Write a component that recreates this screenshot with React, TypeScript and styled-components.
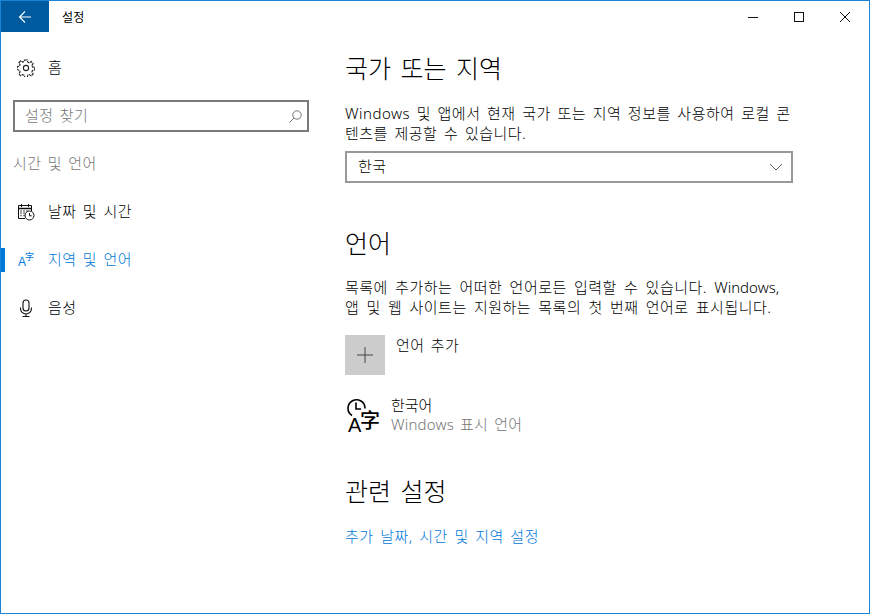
import React from 'react';
import styled, { createGlobalStyle } from 'styled-components';

const GlobalStyle = createGlobalStyle`
  html, body {
    margin: 0;
    padding: 0;
    background: #fff;
  }
  * {
    box-sizing: border-box;
  }
`;

const Window = styled.div`
  width: 870px;
  height: 614px;
  border: 1px solid #1883d7;
  background: #fff;
  color: #000;
  font-family: "Noto Sans", "Noto Sans CJK KR", sans-serif;
  font-size: 15px;
  font-weight: 300;
  display: flex;
  flex-direction: column;
  overflow: hidden;
`;

const TitleBar = styled.header`
  height: 31px;
  flex: none;
  display: flex;
  align-items: center;
`;

const BackButton = styled.div`
  width: 48px;
  height: 31px;
  background: #005a9e;
  color: #fff;
  display: flex;
  align-items: center;
  justify-content: center;
`;

const AppTitle = styled.div`
  margin-left: 13px;
  font-size: 12px;
  font-weight: 400;
  letter-spacing: 0.3px;
`;

const WindowButtons = styled.div`
  margin-left: auto;
  display: flex;
  margin-right: 1px;
`;

const WindowButton = styled.div`
  width: 46px;
  height: 31px;
  display: flex;
  align-items: center;
  justify-content: center;
`;

const Body = styled.div`
  flex: 1;
  display: flex;
`;

const Sidebar = styled.nav`
  width: 344px;
  flex: none;
  padding-top: 12px;
`;

const NavRow = styled.div<{ $active?: boolean }>`
  height: 48px;
  display: flex;
  align-items: center;
  position: relative;
  padding-left: 16px;
  color: ${(p) => (p.$active ? '#0078d7' : '#000')};
  &::before {
    content: '';
    display: ${(p) => (p.$active ? 'block' : 'none')};
    position: absolute;
    left: 0;
    top: 12px;
    width: 4px;
    height: 24px;
    background: #0078d7;
  }
`;

const NavIcon = styled.span`
  width: 18px;
  height: 18px;
  flex: none;
  display: flex;
  align-items: center;
  justify-content: center;
`;

const NavLabel = styled.span`
  margin-left: 13px;
  padding-bottom: 3px;
  font-size: 15px;
  letter-spacing: 0.45px;
  word-spacing: 2px;
`;

const SearchBox = styled.div`
  margin: 8px 0 0 12px;
  width: 296px;
  height: 32px;
  border: 2px solid #7a7a7a;
  display: flex;
  align-items: center;
  justify-content: space-between;
  padding: 0 5px 0 10px;
  color: #767676;
  font-size: 15px;
  word-spacing: 2px;
`;

const SearchText = styled.span`
  padding-bottom: 4px;
  letter-spacing: 0.4px;
`;

const GroupLabel = styled.div`
  margin: 20px 0 24px 12px;
  height: 24px;
  line-height: 22px;
  color: #767676;
  font-size: 15px;
  letter-spacing: 0.4px;
  word-spacing: 2px;
`;

const NavList = styled.div`
  margin-top: -12px;
`;

const Content = styled.main`
  flex: 1;
  padding-top: 16px;
`;

const SectionTitle = styled.h2<{ $gap?: number }>`
  margin: ${(p) => p.$gap ?? 0}px 0 0;
  height: 40px;
  line-height: 40px;
  font-size: 25px;
  font-weight: 300;
  word-spacing: 3px;
`;

const Paragraph = styled.p<{ $gap: number; $wordGap: number }>`
  margin: ${(p) => p.$gap}px 0 0;
  width: 452px;
  font-size: 15px;
  line-height: 20px;
  letter-spacing: 0.5px;
  word-spacing: ${(p) => p.$wordGap}px;
  word-break: break-all;
`;

const Latin = styled.span`
  letter-spacing: 0;
`;

const Select = styled.div`
  margin-top: 8px;
  width: 448px;
  height: 32px;
  border: 2px solid #999;
  display: flex;
  align-items: center;
  justify-content: space-between;
  padding: 0 8px 0 11px;
  font-size: 15px;
`;

const SelectText = styled.span`
  padding-bottom: 4px;
  letter-spacing: 0.5px;
`;

const AddRow = styled.div`
  margin-top: 18px;
  display: flex;
  align-items: flex-start;
`;

const AddTile = styled.div`
  width: 40px;
  height: 40px;
  background: #ccc;
  display: flex;
  align-items: center;
  justify-content: center;
`;

const AddLabel = styled.span`
  margin-left: 11px;
  line-height: 20px;
  letter-spacing: 0.45px;
  word-spacing: 2px;
`;

const LanguageRow = styled.div`
  margin-top: 20px;
  display: flex;
  align-items: center;
`;

const GlyphIcon = styled.span<{ $big?: boolean }>`
  position: relative;
  display: block;
  flex: none;
  width: ${(p) => (p.$big ? 34 : 18)}px;
  height: ${(p) => (p.$big ? 36 : 18)}px;
`;

const GlyphLatin = styled.span<{ $big?: boolean }>`
  position: absolute;
  left: ${(p) => (p.$big ? 3 : 1)}px;
  bottom: ${(p) => (p.$big ? -2 : 1)}px;
  font-family: "Liberation Sans", sans-serif;
  font-size: ${(p) => (p.$big ? 20 : 12)}px;
  font-weight: 400;
  line-height: 1;
`;

const GlyphHan = styled.span<{ $big?: boolean }>`
  position: absolute;
  left: ${(p) => (p.$big ? 15 : 8)}px;
  top: ${(p) => (p.$big ? 13 : 1)}px;
  font-family: "Noto Sans CJK SC", sans-serif;
  font-size: ${(p) => (p.$big ? 20 : 9)}px;
  font-weight: ${(p) => (p.$big ? 500 : 400)};
  line-height: 1;
`;

const ClockOverlay = styled.svg`
  position: absolute;
  left: 0;
  top: 0;
`;

const LanguageText = styled.div`
  margin-left: 12px;
  line-height: 20px;
`;

const LanguageSub = styled.div`
  margin-top: -1px;
  color: #767676;
  letter-spacing: 0.2px;
  word-spacing: 2px;
`;

const RelatedLink = styled.a`
  display: block;
  margin-top: 15px;
  color: #0078d7;
  font-size: 15px;
  line-height: 20px;
  letter-spacing: 0.55px;
  word-spacing: 2px;
`;

function GearIcon() {
  return (
    <svg width="18" height="18" viewBox="0 0 18 18" fill="none" stroke="#222" strokeWidth="1.1">
      <circle cx="9" cy="9" r="2.6" />
      <path d="M7.6 1h2.8l.4 2.2 1.5.6 1.9-1.3 2 2-1.3 1.9.6 1.5 2.2.4v2.8l-2.2.4-.6 1.5 1.3 1.9-2 2-1.9-1.3-1.5.6-.4 2.2H7.6l-.4-2.2-1.5-.6-1.9 1.3-2-2 1.3-1.9-.6-1.5L.3 10.4V7.6l2.2-.4.6-1.5-1.3-1.9 2-2 1.9 1.3 1.5-.6z" strokeDasharray="3 .7" />
    </svg>
  );
}

function CalendarClockIcon() {
  return (
    <svg width="18" height="18" viewBox="0 0 18 18" fill="none" stroke="#111" strokeWidth="1">
      <path d="M8 15.5H1.5V2.5h13V8" />
      <path d="M4.5 1v3M11.5 1v3" />
      <path d="M1.5 5.5h13" strokeWidth="1.5" />
      <path d="M3.5 8h1M6.5 8h1M9.5 8h1M3.5 10h1M6.5 10h1M3.5 12.5h1M6.5 12.5h1" strokeWidth="1.4" />
      <circle cx="12.5" cy="12.5" r="4.5" fill="#fff" />
      <path d="M12.5 10v2.8h2.2" />
    </svg>
  );
}

function MicIcon() {
  return (
    <svg width="18" height="18" viewBox="0 0 18 18" fill="none" stroke="#111" strokeWidth="1.1">
      <rect x="6" y="1" width="6" height="11" rx="3" />
      <path d="M3.5 8.5v1a5.5 5.5 0 0 0 11 0v-1M9 15v2.5M5.5 17.5h7" />
    </svg>
  );
}

export default function App(): React.ReactElement {
  return (
    <>
      <GlobalStyle />
      <Window>
        <TitleBar>
          <BackButton>
            <svg width="14" height="14" viewBox="0 0 14 14" fill="none" stroke="#fff" strokeWidth="1.1">
              <path d="M13 7H1.5M7 1.5 1.5 7 7 12.5" />
            </svg>
          </BackButton>
          <AppTitle>설정</AppTitle>
          <WindowButtons>
            <WindowButton>
              <svg width="10" height="10" viewBox="0 0 10 10" stroke="#111" strokeWidth="1">
                <path d="M0 5.5h10" />
              </svg>
            </WindowButton>
            <WindowButton>
              <svg width="10" height="10" viewBox="0 0 10 10" fill="none" stroke="#111" strokeWidth="1">
                <rect x=".5" y=".5" width="9" height="9" />
              </svg>
            </WindowButton>
            <WindowButton>
              <svg width="10" height="10" viewBox="0 0 10 10" stroke="#111" strokeWidth="1">
                <path d="M0 0l10 10M10 0 0 10" />
              </svg>
            </WindowButton>
          </WindowButtons>
        </TitleBar>
        <Body>
          <Sidebar>
            <NavRow>
              <NavIcon>
                <GearIcon />
              </NavIcon>
              <NavLabel>홈</NavLabel>
            </NavRow>
            <SearchBox>
              <SearchText>설정 찾기</SearchText>
              <svg width="13" height="13" viewBox="0 0 13 13" fill="none" stroke="#767676" strokeWidth="1">
                <circle cx="8" cy="5" r="4.2" />
                <path d="M5 8 .5 12.5" />
              </svg>
            </SearchBox>
            <GroupLabel>시간 및 언어</GroupLabel>
            <NavList>
              <NavRow>
                <NavIcon>
                  <CalendarClockIcon />
                </NavIcon>
                <NavLabel>날짜 및 시간</NavLabel>
              </NavRow>
              <NavRow $active>
                <GlyphIcon>
                  <GlyphLatin>A</GlyphLatin>
                  <GlyphHan>字</GlyphHan>
                </GlyphIcon>
                <NavLabel>지역 및 언어</NavLabel>
              </NavRow>
              <NavRow>
                <NavIcon>
                  <MicIcon />
                </NavIcon>
                <NavLabel>음성</NavLabel>
              </NavRow>
            </NavList>
          </Sidebar>
          <Content>
            <SectionTitle>국가 또는 지역</SectionTitle>
            <Paragraph $gap={15} $wordGap={2.2}>
              Windows 및 앱에서 현재 국가 또는 지역 정보를 사용하여 로컬 콘텐츠를 제공할 수 있습니다.
            </Paragraph>
            <Select>
              <SelectText>한국</SelectText>
              <svg width="14" height="8" viewBox="0 0 14 8" fill="none" stroke="#666" strokeWidth="1">
                <path d="M1 1l6 6 6-6" />
              </svg>
            </Select>
            <SectionTitle $gap={40}>언어</SectionTitle>
            <Paragraph $gap={14} $wordGap={2.8}>
              목록에 추가하는 어떠한 언어로든 입력할 수 있습니다. <Latin>Windows,</Latin> 앱 및 웹 사이트는 지원하는 목록의 첫 번째 언어로 표시됩니다.
            </Paragraph>
            <AddRow>
              <AddTile>
                <svg width="16" height="16" viewBox="0 0 16 16" stroke="#444" strokeWidth="1">
                  <path d="M0 8h16M8 0v16" />
                </svg>
              </AddTile>
              <AddLabel>언어 추가</AddLabel>
            </AddRow>
            <LanguageRow>
              <GlyphIcon $big>
                <ClockOverlay width="22" height="22" viewBox="0 0 22 22" fill="none" stroke="#000" strokeWidth="1.6">
                  <path d="M7 18.5a8.5 8.5 0 1 1 13-7" />
                  <path d="M11 5.5v6.5h5" />
                </ClockOverlay>
                <GlyphLatin $big>A</GlyphLatin>
                <GlyphHan $big>字</GlyphHan>
              </GlyphIcon>
              <LanguageText>
                <div>한국어</div>
                <LanguageSub>Windows 표시 언어</LanguageSub>
              </LanguageText>
            </LanguageRow>
            <SectionTitle $gap={37}>관련 설정</SectionTitle>
            <RelatedLink>추가 날짜, 시간 및 지역 설정</RelatedLink>
          </Content>
        </Body>
      </Window>
    </>
  );
}
